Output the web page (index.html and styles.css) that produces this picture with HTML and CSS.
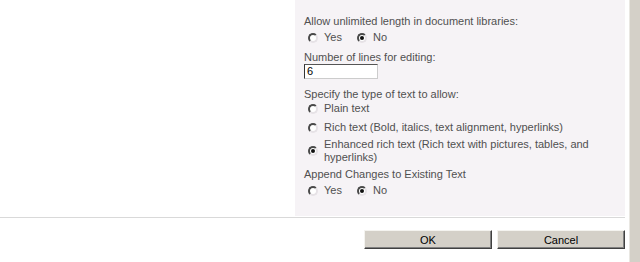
FILE: index.html
```html
<!DOCTYPE html>
<html>
<head>
<meta charset="utf-8">
<link rel="stylesheet" href="styles.css">
</head>
<body>
<div class="page">
  <div class="main">
    <div class="top">
      <div class="blank"></div>
      <div class="panel">
        <div class="label l1">Allow unlimited length in document libraries:</div>
        <div class="inline-opts o1">
          <span class="opt"><span class="radio"></span><span class="txt">Yes</span></span>
          <span class="opt"><span class="radio on"></span><span class="txt">No</span></span>
        </div>
        <div class="label l2">Number of lines for editing:</div>
        <div class="input">6</div>
        <div class="label l3">Specify the type of text to allow:</div>
        <div class="opt-row r1"><span class="radio"></span><span class="txt">Plain text</span></div>
        <div class="opt-row r2"><span class="radio"></span><span class="txt">Rich text (Bold, italics, text alignment, hyperlinks)</span></div>
        <div class="opt-row r3"><span class="radio on"></span><span class="txt">Enhanced rich text (Rich text with pictures, tables, and hyperlinks)</span></div>
        <div class="label l4">Append Changes to Existing Text</div>
        <div class="inline-opts o2">
          <span class="opt"><span class="radio"></span><span class="txt">Yes</span></span>
          <span class="opt"><span class="radio on"></span><span class="txt">No</span></span>
        </div>
      </div>
    </div>
    <div class="rule"></div>
    <div class="buttons">
      <button class="btn">OK</button>
      <button class="btn">Cancel</button>
    </div>
  </div>
  <div class="gutter"><div class="scroll"></div></div>
</div>
</body>
</html>
```
FILE: styles.css
```css
html, body {
  margin: 0;
  padding: 0;
  background: #fff;
}
.page {
  width: 640px;
  height: 262px;
  display: flex;
  overflow: hidden;
  font-family: "Liberation Sans", Arial, sans-serif;
  font-size: 11px;
  line-height: 13px;
  color: #505050;
}
.main {
  width: 625px;
  display: flex;
  flex-direction: column;
}
.top {
  display: flex;
  height: 216px;
}
.blank {
  width: 295px;
}
.panel {
  width: 330px;
  background: #f6f3f6;
  padding: 15px 9px 0 9px;
  box-sizing: border-box;
}
.rule {
  height: 1px;
  margin-top: 1px;
  background: #d9d9d9;
}
.l2 { margin-top: 7px; }
.l3 { margin-top: 9px; }
.l4 { margin-top: 4px; }
.inline-opts {
  display: flex;
  gap: 15px;
  padding-left: 4px;
  margin-top: 3px;
}
.opt {
  display: flex;
  align-items: center;
  gap: 6px;
}
.opt-row {
  display: flex;
  align-items: center;
  gap: 6px;
  padding-left: 4px;
}
.r1 { margin-top: 1px; }
.r2 { margin-top: 6px; }
.r3 { margin-top: 4px; }
.radio {
  flex: none;
  width: 6px;
  height: 6px;
  border-radius: 50%;
  border: 2px solid;
  border-color: #4a4a4a #e6e2e6 #e6e2e6 #4a4a4a;
  background: #fff;
  position: relative;
}
.radio.on::after {
  content: "";
  position: absolute;
  left: 1px;
  top: 1px;
  width: 4px;
  height: 4px;
  border-radius: 50%;
  background: #111;
}
.input {
  width: 74px;
  height: 15px;
  box-sizing: border-box;
  border: 1px solid;
  border-color: #555 #ccc #ccc #333;
  background: #fff;
  color: #000;
  padding-left: 2px;
  line-height: 13px;
}
.buttons {
  display: flex;
  justify-content: flex-end;
  gap: 5px;
  margin-top: 12px;
}
.btn {
  width: 128px;
  height: 19px;
  margin: 0;
  padding: 0;
  background: #d4d0c8;
  border: 1px solid;
  border-color: #f4f3ef #404040 #404040 #f4f3ef;
  box-shadow: inset -1px -1px 0 #808080;
  font-family: "Liberation Sans", Arial, sans-serif;
  font-size: 11px;
  color: #000;
}
.gutter {
  width: 15px;
  display: flex;
  justify-content: flex-end;
}
.scroll {
  width: 10px;
  background: #d4d0c8;
  border-left: 1px solid #e9e7e2;
}
```
